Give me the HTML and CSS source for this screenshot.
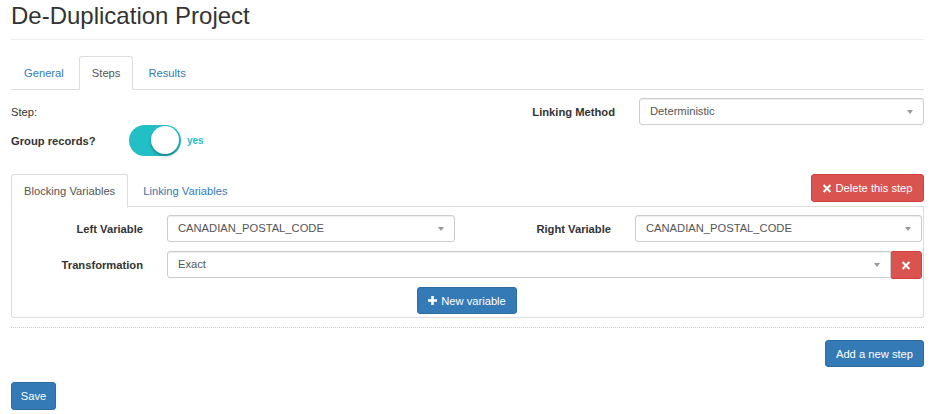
FILE: index.html
```html
<!DOCTYPE html>
<html>
<head>
<meta charset="utf-8">
<title>De-Duplication Project</title>
<link rel="stylesheet" href="styles.css">
</head>
<body>
<div class="page">
  <h2 class="page-title">De-Duplication Project</h2>

  <ul class="tabs main-tabs">
    <li><a>General</a></li>
    <li class="active"><a>Steps</a></li>
    <li><a>Results</a></li>
  </ul>

  <div class="step-head">
    <div class="step-label">Step:</div>
    <label class="field-label lm-label">Linking Method</label>
    <div class="select lm-select">Deterministic<span class="caret"></span></div>
  </div>

  <div class="group-row">
    <span class="field-label group-label">Group records?</span>
    <span class="toggle"><span class="knob"></span></span>
    <span class="toggle-text">yes</span>
  </div>

  <div class="var-head">
    <ul class="tabs var-tabs">
      <li class="active"><a>Blocking Variables</a></li>
      <li><a>Linking Variables</a></li>
    </ul>
    <button class="btn btn-danger delete-btn"><svg class="ico-x" viewBox="0 0 10 10"><path d="M2 0.4 L5 3.4 L8 0.4 L9.6 2 L6.6 5 L9.6 8 L8 9.6 L5 6.6 L2 9.6 L0.4 8 L3.4 5 L0.4 2Z" fill="currentColor"/></svg> Delete this step</button>
  </div>

  <div class="tab-panel">
    <div class="var-grid">
      <label class="field-label grid-label">Left Variable</label>
      <div class="select">CANADIAN_POSTAL_CODE<span class="caret"></span></div>
      <label class="field-label grid-label">Right Variable</label>
      <div class="select">CANADIAN_POSTAL_CODE<span class="caret"></span></div>

      <label class="field-label grid-label">Transformation</label>
      <div class="input-group">
        <div class="select select-joined">Exact<span class="caret"></span></div>
        <button class="btn btn-danger remove-btn"><svg class="ico-x" viewBox="0 0 10 10"><path d="M2 0.4 L5 3.4 L8 0.4 L9.6 2 L6.6 5 L9.6 8 L8 9.6 L5 6.6 L2 9.6 L0.4 8 L3.4 5 L0.4 2Z" fill="currentColor"/></svg></button>
      </div>
    </div>
    <div class="center-row">
      <button class="btn btn-primary"><svg class="ico-plus" viewBox="0 0 11 11"><path d="M3.9 0 H7.1 V3.9 H11 V7.1 H7.1 V11 H3.9 V7.1 H0 V3.9 H3.9Z" fill="currentColor"/></svg> New variable</button>
    </div>
  </div>

  <hr class="dotted">

  <div class="right-row">
    <button class="btn btn-primary">Add a new step</button>
  </div>

  <div class="save-row">
    <button class="btn btn-primary">Save</button>
  </div>
</div>
</body>
</html>
```

FILE: styles.css
```css
* { box-sizing: border-box; }

body {
  margin: 0;
  background: #fff;
  font-family: "Liberation Sans", Arial, Helvetica, sans-serif;
  font-size: 11.2px;
  line-height: 16px;
  color: #333;
}

.page {
  padding: 0 13px 0 11px;
}

.page-title {
  margin: 3px 0 16px;
  padding-bottom: 10px;
  border-bottom: 1px solid #eee;
  font-size: 24px;
  line-height: 26px;
  font-weight: 400;
  color: #333;
}

/* tabs */
.tabs {
  list-style: none;
  margin: 0;
  padding: 0;
  display: flex;
  border-bottom: 1px solid #ddd;
}
.tabs li {
  margin-right: 2px;
  margin-bottom: -1px;
}
.tabs a {
  display: block;
  padding: 8px 12px;
  line-height: 16px;
  border: 1px solid transparent;
  border-radius: 3px 3px 0 0;
  color: #337ab7;
}
.tabs li.active a {
  color: #555;
  background: #fff;
  border-color: #ddd;
  border-bottom-color: #fff;
}

/* step header */
.step-head {
  display: flex;
  align-items: center;
  margin-top: 8px;
  height: 27px;
}
.step-label { flex: 1; }
.field-label {
  font-weight: 700;
  color: #333;
}
.lm-label { padding-right: 24px; }
.lm-select { width: 285px; }

/* selects */
.select {
  position: relative;
  height: 27px;
  line-height: 25px;
  padding: 0 22px 0 10px;
  border: 1px solid #ccc;
  border-radius: 3px;
  color: #555;
  background: #fff;
  box-shadow: inset 0 1px 1px rgba(0,0,0,.075);
  white-space: nowrap;
}
.caret {
  position: absolute;
  right: 10px;
  top: 11px;
  width: 0;
  height: 0;
  border-left: 3px solid transparent;
  border-right: 3px solid transparent;
  border-top: 4px solid #999;
}

/* group toggle */
.group-row {
  display: flex;
  align-items: center;
  margin-top: -1px;
  height: 33px;
}
.group-label { width: 118px; }
.toggle {
  position: relative;
  width: 52px;
  height: 31px;
  border-radius: 16px;
  background: #22bfc6;
}
.knob {
  position: absolute;
  right: 2px;
  top: 1px;
  width: 28px;
  height: 28px;
  border-radius: 50%;
  background: #fff;
  box-shadow: 0 2px 3px rgba(0,0,0,.3);
}
.toggle-text {
  margin-left: 6px;
  font-size: 10px;
  font-weight: 700;
  color: #22bfc6;
}

/* variable tabs */
.var-head {
  display: flex;
  align-items: flex-start;
  margin-top: 17px;
  border-bottom: 1px solid #ddd;
}
.var-tabs {
  border-bottom: 0;
  margin-bottom: -1px;
}
.delete-btn {
  margin-left: auto;
  width: 113px;
}

.tab-panel {
  border: 1px solid #ddd;
  border-top: 0;
  border-radius: 0 0 3px 3px;
  padding: 8px 1px 3px 0;
}

.var-grid {
  display: grid;
  grid-template-columns: 131px 288px 132px 1fr;
  column-gap: 24px;
  row-gap: 9px;
  align-items: center;
}
.grid-label { text-align: right; }
.input-group {
  grid-column: 2 / 5;
  display: flex;
}
.select-joined {
  flex: 1;
  border-radius: 3px 0 0 3px;
}
.remove-btn {
  width: 32px;
  height: 27px;
  padding: 0;
  border-radius: 0 3px 3px 0;
  margin-left: -1px;
}

.center-row {
  display: flex;
  justify-content: center;
  margin-top: 8px;
}
.center-row .btn { height: 27px; width: 100px; }

/* buttons */
.btn {
  display: inline-flex;
  align-items: center;
  justify-content: center;
  height: 28px;
  padding: 0 10px;
  font-family: inherit;
  font-size: 11.2px;
  line-height: 16px;
  border: 1px solid transparent;
  border-radius: 3px;
  color: #fff;
  cursor: pointer;
  white-space: nowrap;
}
.btn-primary { background: #337ab7; border-color: #2e6da4; }
.btn-danger { background: #d9534f; border-color: #d43f3a; }

.ico-x { width: 10px; height: 9px; margin-right: 3px; }
.remove-btn .ico-x { margin-right: 0; width: 10px; height: 9px; }
.ico-plus { width: 9px; height: 9px; margin-right: 4px; }

hr.dotted {
  margin: 9px 0 0;
  border: 0;
  border-top: 1px dotted #ccc;
}

.right-row {
  display: flex;
  justify-content: flex-end;
  margin-top: 12px;
}
.right-row .btn { width: 99px; height: 27px; }

.save-row {
  margin-top: 15px;
}
.save-row .btn { width: 45px; }
```
